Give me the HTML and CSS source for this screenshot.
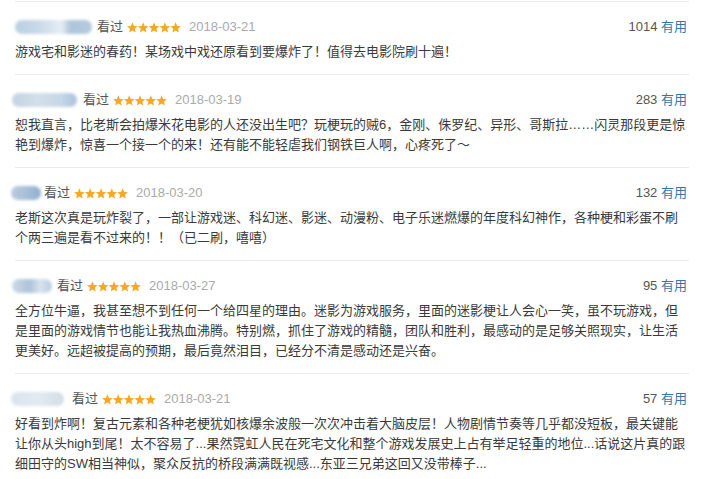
FILE: index.html
```html
<!DOCTYPE html>
<html lang="zh-CN">
<head>
<meta charset="utf-8">
<title>短评</title>
<link rel="stylesheet" href="styles.css">
</head>
<body>
<svg width="0" height="0" class="defs">
  <defs>
    <polygon id="st" points="5.4,0.3 6.87,3.88 10.73,4.17 7.78,6.67 8.69,10.43 5.4,8.4 2.11,10.43 3.02,6.67 0.07,4.17 3.93,3.88"/>
  </defs>
</svg>
<div class="comments">
  <div class="item">
    <div class="head">
      <span class="name n1"></span>
      <span class="watched">看过</span>
      <svg class="stars" viewBox="0 0 54 11" width="54" height="11"><use href="#st"/><use href="#st" x="10.8"/><use href="#st" x="21.6"/><use href="#st" x="32.4"/><use href="#st" x="43.2"/></svg>
      <span class="date">2018-03-21</span>
      <span class="votes"><span class="count">1014</span> <span class="useful">有用</span></span>
    </div>
    <p class="text">游戏宅和影迷的春药！某场戏中戏还原看到要爆炸了！值得去电影院刷十遍！</p>
  </div>
  <div class="item">
    <div class="head">
      <span class="name n2"></span>
      <span class="watched">看过</span>
      <svg class="stars" viewBox="0 0 54 11" width="54" height="11"><use href="#st"/><use href="#st" x="10.8"/><use href="#st" x="21.6"/><use href="#st" x="32.4"/><use href="#st" x="43.2"/></svg>
      <span class="date">2018-03-19</span>
      <span class="votes"><span class="count">283</span> <span class="useful">有用</span></span>
    </div>
    <p class="text">恕我直言，比老斯会拍爆米花电影的人还没出生吧？玩梗玩的贼6，金刚、侏罗纪、异形、哥斯拉……闪灵那段更是惊<br>艳到爆炸，惊喜一个接一个的来！还有能不能轻虐我们钢铁巨人啊，心疼死了～</p>
  </div>
  <div class="item">
    <div class="head">
      <span class="name n3"></span>
      <span class="watched">看过</span>
      <svg class="stars" viewBox="0 0 54 11" width="54" height="11"><use href="#st"/><use href="#st" x="10.8"/><use href="#st" x="21.6"/><use href="#st" x="32.4"/><use href="#st" x="43.2"/></svg>
      <span class="date">2018-03-20</span>
      <span class="votes"><span class="count">132</span> <span class="useful">有用</span></span>
    </div>
    <p class="text">老斯这次真是玩炸裂了，一部让游戏迷、科幻迷、影迷、动漫粉、电子乐迷燃爆的年度科幻神作，各种梗和彩蛋不刷<br>个两三遍是看不过来的！！（已二刷，嘻嘻）</p>
  </div>
  <div class="item">
    <div class="head">
      <span class="name n4"></span>
      <span class="watched">看过</span>
      <svg class="stars" viewBox="0 0 54 11" width="54" height="11"><use href="#st"/><use href="#st" x="10.8"/><use href="#st" x="21.6"/><use href="#st" x="32.4"/><use href="#st" x="43.2"/></svg>
      <span class="date">2018-03-27</span>
      <span class="votes"><span class="count">95</span> <span class="useful">有用</span></span>
    </div>
    <p class="text">全方位牛逼，我甚至想不到任何一个给四星的理由。迷影为游戏服务，里面的迷影梗让人会心一笑，虽不玩游戏，但<br>是里面的游戏情节也能让我热血沸腾。特别燃，抓住了游戏的精髓，团队和胜利，最感动的是足够关照现实，让生活<br>更美好。远超被提高的预期，最后竟然泪目，已经分不清是感动还是兴奋。</p>
  </div>
  <div class="item">
    <div class="head">
      <span class="name n5"></span>
      <span class="watched">看过</span>
      <svg class="stars" viewBox="0 0 54 11" width="54" height="11"><use href="#st"/><use href="#st" x="10.8"/><use href="#st" x="21.6"/><use href="#st" x="32.4"/><use href="#st" x="43.2"/></svg>
      <span class="date">2018-03-21</span>
      <span class="votes"><span class="count">57</span> <span class="useful">有用</span></span>
    </div>
    <p class="text">好看到炸啊！复古元素和各种老梗犹如核爆余波般一次次冲击着大脑皮层！人物剧情节奏等几乎都没短板，最关键能<br>让你从头high到尾！太不容易了...果然霓虹人民在死宅文化和整个游戏发展史上占有举足轻重的地位...话说这片真的跟<br>细田守的SW相当神似，聚众反抗的桥段满满既视感...东亚三兄弟这回又没带棒子...</p>
  </div>
</div>
</body>
</html>
```
FILE: styles.css
```css
html, body {
  margin: 0;
  padding: 0;
  background: #fff;
}
.defs {
  position: absolute;
  width: 0;
  height: 0;
}
.comments {
  margin-left: 15px;
  padding-top: 1px;
  width: 674px;
  font-family: "Liberation Sans", "Noto Sans CJK SC", sans-serif;
  font-size: 13px;
  color: #3a3a3a;
}
.item {
  border-top: 1px solid #eaeaea;
  padding: 15px 0 12px;
}
.head {
  display: flex;
  align-items: center;
  height: 20px;
  line-height: 20px;
}
.name {
  height: 14px;
  border-radius: 7px;
  filter: blur(1.5px);
  margin-right: 5px;
  background: linear-gradient(90deg, #b9cfe2 0%, #c8d9e8 30%, #d6e3ee 45%, #e6eef5 60%, #aec6db 72%, #b4cadd 100%);
}
.n1 { width: 77px; }
.n2 { width: 65px; margin-left: -3px; margin-right: 6px; background: linear-gradient(90deg, #c3d3e2 0%, #d3dfea 40%, #c7d7e6 75%, #a9c2d9 100%); }
.n3 { width: 30px; margin-left: -4px; margin-right: 3px; background: linear-gradient(90deg, #b7cbde 0%, #a4bdd6 60%, #8eaed0 100%); }
.n4 { width: 40px; margin-left: -3px; margin-right: 5px; background: linear-gradient(90deg, #cbd9e6 0%, #aec4d9 45%, #d8e3ed 70%, #b9cde0 100%); }
.n5 { width: 53px; margin-left: -4px; margin-right: 8px; background: linear-gradient(90deg, #d9e3ec 0%, #e3eaf1 50%, #d1dde8 100%); }
.watched {
  color: #555;
  margin-right: 4px;
}
.stars {
  fill: #f7a823;
  margin-right: 8px;
}
.date {
  color: #aaa;
}
.votes {
  margin-left: auto;
  margin-right: 2px;
}
.count {
  color: #555;
}
.useful {
  color: #37a;
}
.text {
  margin: 5px 0 0;
  line-height: 20px;
  white-space: nowrap;
}
```
